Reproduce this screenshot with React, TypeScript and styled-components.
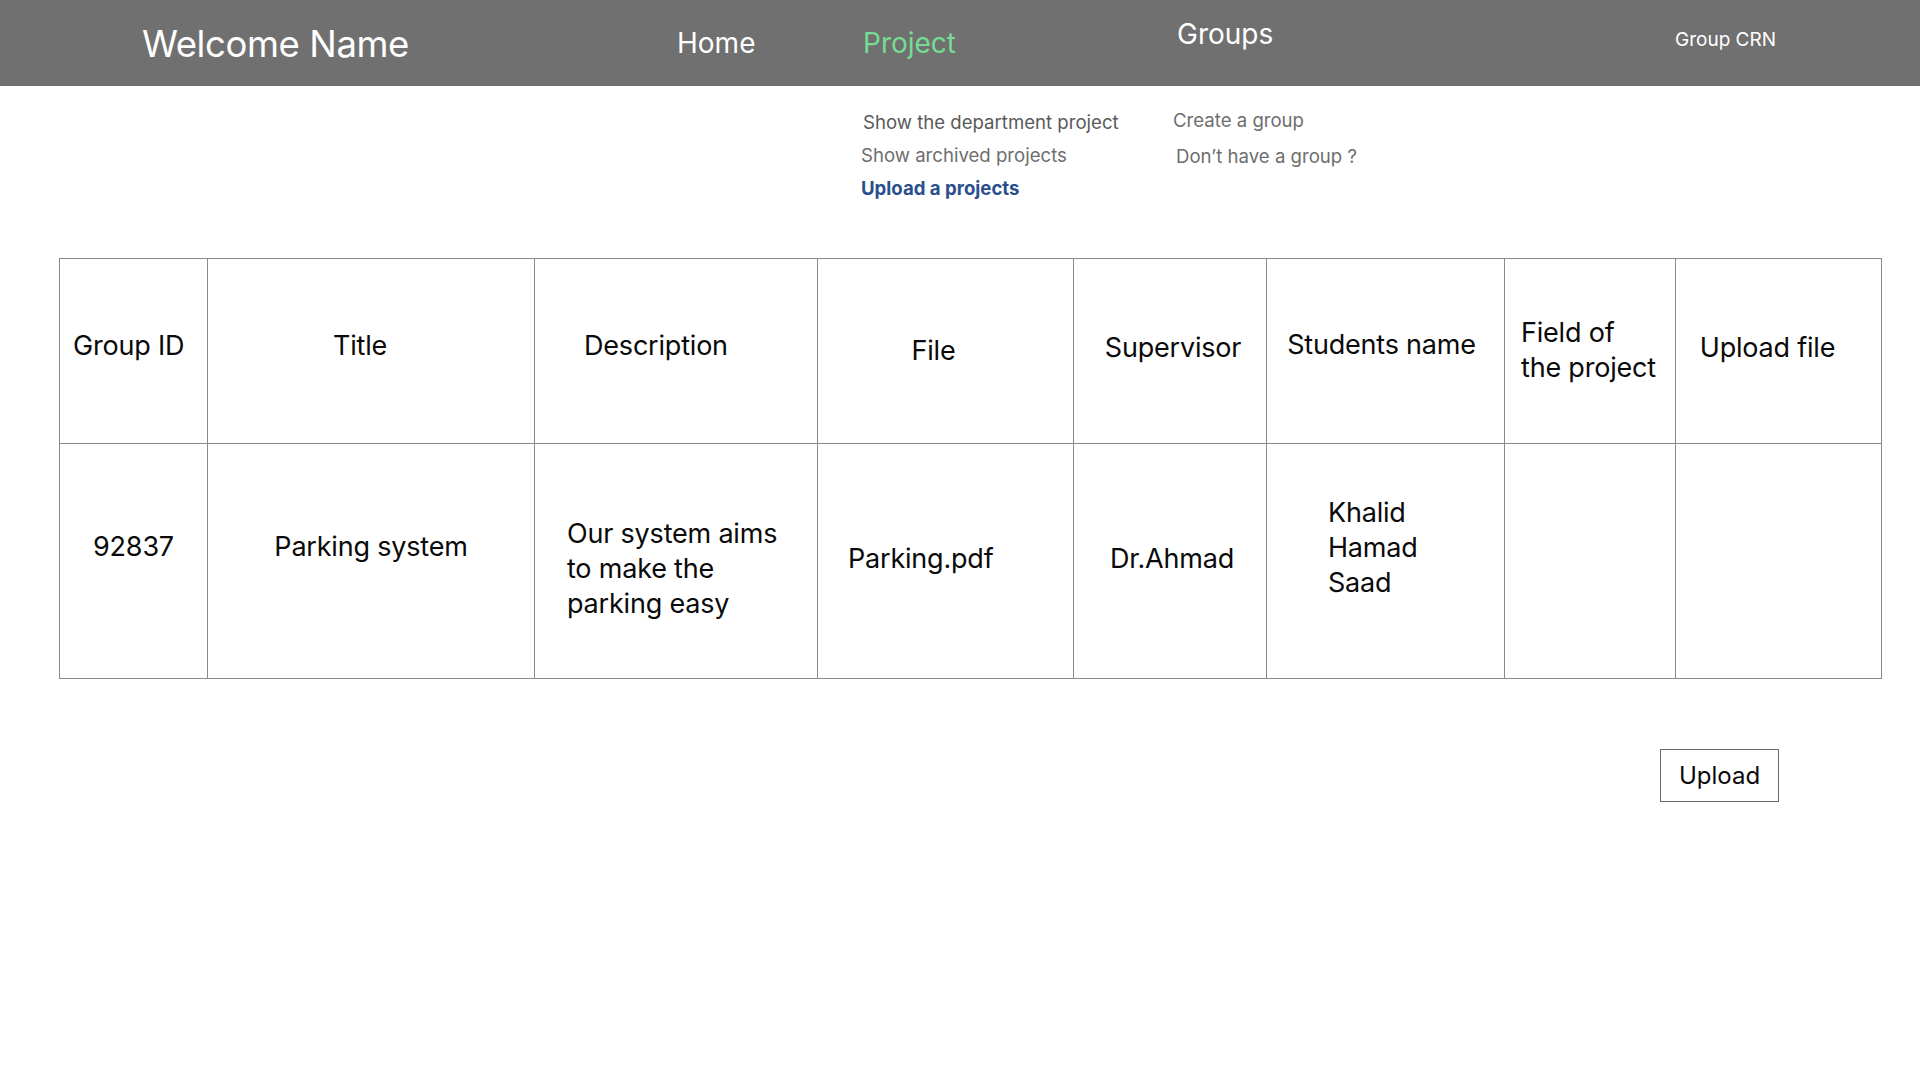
import React from "react";
import styled, { createGlobalStyle } from "styled-components";

const GlobalStyle = createGlobalStyle`
  html, body { margin: 0; padding: 0; background: #ffffff; }
  body { font-family: Inter, "Noto Sans", "Liberation Sans", sans-serif; color: #000; }
  * { box-sizing: border-box; }
`;

const Page = styled.div`
  width: 1920px;
  min-height: 1080px;
  background: #fff;
`;

const TopBar = styled.header`
  height: 86px;
  background: #707070;
  display: flex;
  align-items: center;
  padding-left: 142px;
`;

const Brand = styled.div`
  width: 535px;
  font-size: 36.5px;
  color: #ffffff;
  letter-spacing: -0.4px;
  margin-top: 2px;
`;

const NavItem = styled.a<{ $w?: number; $active?: boolean; $size?: number; $dy?: number }>`
  display: block;
  width: ${(p) => (p.$w ? `${p.$w}px` : "auto")};
  font-size: ${(p) => p.$size ?? 28}px;
  color: ${(p) => (p.$active ? "#74dc93" : "#ffffff")};
  text-decoration: none;
  transform: translateY(${(p) => p.$dy ?? 0}px);
`;

const SubNav = styled.div`
  display: flex;
  padding-left: 861px;
  padding-top: 20px;
`;

const SubCol = styled.div<{ $w?: number; $dy?: number }>`
  width: ${(p) => (p.$w ? `${p.$w}px` : "auto")};
  display: flex;
  flex-direction: column;
  margin-top: ${(p) => p.$dy ?? 0}px;
`;

const SubLink = styled.a<{ $tone?: "dark" | "light" | "blue"; $dx?: number; $dy?: number }>`
  display: block;
  font-size: 18.6px;
  line-height: 33px;
  text-decoration: none;
  margin-left: ${(p) => p.$dx ?? 0}px;
  margin-top: ${(p) => p.$dy ?? 0}px;
  color: ${(p) => (p.$tone === "blue" ? "#2a4f8c" : p.$tone === "dark" ? "#5a5a5a" : "#6e6e6e")};
  font-weight: ${(p) => (p.$tone === "blue" ? 700 : 400)};
`;

const TableWrap = styled.div`
  margin: 53px 39px 0 59px;
`;

const Table = styled.table`
  width: 1822px;
  border-collapse: collapse;
  table-layout: fixed;
  border: 1px solid #7a7a7a;
`;

const HeadRow = styled.tr`
  height: 185px;
`;

const BodyRow = styled.tr`
  height: 235px;
`;

const Cell = styled.td<{ $align?: "left" | "center"; $pl?: number; $pr?: number; $dy?: number }>`
  border: 1px solid #8a8a8a;
  font-size: 27px;
  font-weight: 400;
  line-height: 35px;
  color: #0a0a0a;
  vertical-align: middle;
  text-align: ${(p) => p.$align ?? "center"};
  padding: ${(p) => (p.$dy && p.$dy < 0 ? 0 : p.$dy ?? 0)}px ${(p) => p.$pr ?? 0}px
    ${(p) => (p.$dy && p.$dy < 0 ? -p.$dy : 0)}px ${(p) => p.$pl ?? 0}px;
  letter-spacing: -0.2px;
`;

const Actions = styled.div`
  display: flex;
  justify-content: flex-end;
  padding-right: 141px;
  margin-top: 70px;
`;

const UploadButton = styled.button`
  width: 119px;
  height: 53px;
  background: #ffffff;
  border: 1px solid #6a6a6a;
  font-family: Inter, "Noto Sans", "Liberation Sans", sans-serif;
  font-size: 24px;
  color: #0a0a0a;
  padding: 0;
  cursor: pointer;
`;

const columns = [148, 327, 283, 256, 193, 238, 171, 206];

export default function App() {
  return (
    <Page>
      <GlobalStyle />
      <TopBar>
        <Brand>Welcome Name</Brand>
        <NavItem $w={186}>Home</NavItem>
        <NavItem $w={314} $active>Project</NavItem>
        <NavItem $w={498} $dy={-9}>Groups</NavItem>
        <NavItem $size={19} $dy={-4}>Group CRN</NavItem>
      </TopBar>

      <SubNav>
        <SubCol $w={312}>
          <SubLink $tone="dark" $dx={2}>Show the department project</SubLink>
          <SubLink>Show archived projects</SubLink>
          <SubLink $tone="blue">Upload a projects</SubLink>
        </SubCol>
        <SubCol $dy={-2}>
          <SubLink>Create a group</SubLink>
          <SubLink $dx={3} $dy={3}>Don’t have a group ?</SubLink>
        </SubCol>
      </SubNav>

      <TableWrap>
        <Table>
          <colgroup>
            {columns.map((w, i) => (
              <col key={i} style={{ width: w }} />
            ))}
          </colgroup>
          <thead>
            <HeadRow>
              <Cell as="th" $align="left" $pl={13} $dy={-12}>Group ID</Cell>
              <Cell as="th" $pr={22} $dy={-12}>Title</Cell>
              <Cell as="th" $align="left" $pl={49} $dy={-12}>Description</Cell>
              <Cell as="th" $pr={24} $dy={-2}>File</Cell>
              <Cell as="th" $pl={6} $dy={-8}>Supervisor</Cell>
              <Cell as="th" $pr={8} $dy={-14}>Students name</Cell>
              <Cell as="th" $align="left" $pl={16} $dy={-2}>Field of<br />the project</Cell>
              <Cell as="th" $pr={22} $dy={-8}>Upload file</Cell>
            </HeadRow>
          </thead>
          <tbody>
            <BodyRow>
              <Cell $dy={-30}>92837</Cell>
              <Cell $dy={-30}>Parking system</Cell>
              <Cell $align="left" $pl={32} $dy={14}>Our system aims<br />to make the<br />parking easy</Cell>
              <Cell $align="left" $pl={30} $dy={-6}>Parking.pdf</Cell>
              <Cell $pl={4} $dy={-6}>Dr.Ahmad</Cell>
              <Cell $align="left" $pl={61} $dy={-28}>Khalid<br />Hamad<br />Saad</Cell>
              <Cell />
              <Cell />
            </BodyRow>
          </tbody>
        </Table>
      </TableWrap>

      <Actions>
        <UploadButton>Upload</UploadButton>
      </Actions>
    </Page>
  );
}
